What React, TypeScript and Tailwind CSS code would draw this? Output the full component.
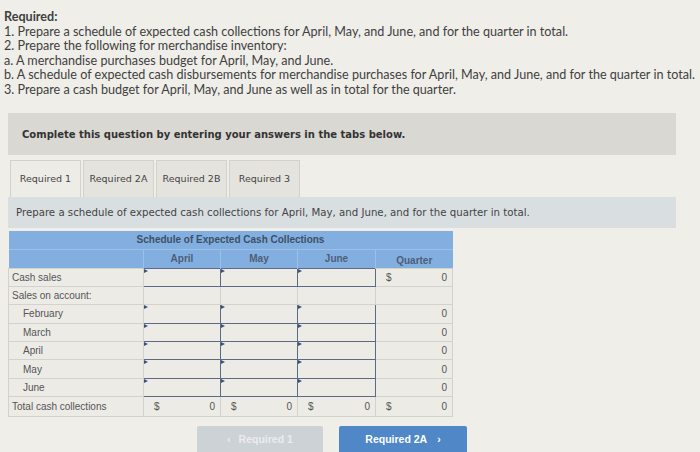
import React from "react";

const months = ["April", "May", "June"];

function InputCell() {
  return (
    <td className="relative h-[18.4px] border-[1.5px] border-[#5d6a86] bg-[#ecebe6] p-0">
      <span className="absolute left-0 top-0 h-0 w-0 border-y-[2.5px] border-l-[4px] border-y-transparent border-l-[#3d4f7a]" />
    </td>
  );
}

function PlainCell() {
  return <td className="h-[18.4px] border border-[#d3d2cd] bg-[#ecebe6] p-0" />;
}

function DollarCell({ value }: { value: string }) {
  return (
    <td className="h-[18.4px] border border-[#d3d2cd] bg-[#ecebe6] p-0">
      <div className="flex items-center justify-between pl-[10px] pr-[5px]">
        <span>$</span>
        <span>{value}</span>
      </div>
    </td>
  );
}

export default function App() {
  const rows: { label: string; indent?: boolean; inputs: boolean; quarter: string }[] = [
    { label: "Cash sales", inputs: true, quarter: "dollar" },
    { label: "Sales on account:", inputs: false, quarter: "" },
    { label: "February", indent: true, inputs: true, quarter: "0" },
    { label: "March", indent: true, inputs: true, quarter: "0" },
    { label: "April", indent: true, inputs: true, quarter: "0" },
    { label: "May", indent: true, inputs: true, quarter: "0" },
    { label: "June", indent: true, inputs: true, quarter: "0" },
  ];

  return (
    <div className="relative h-[452px] w-[700px] overflow-hidden bg-[#efeee9]">
      <div
        className="pl-[4px] pt-[10px] text-[12.6px] leading-[14.5px] text-[#3f3f3f]"
        style={{ fontFamily: "Lato, 'Open Sans', sans-serif" }}
      >
        <div className="font-bold">Required:</div>
        <div>1. Prepare a schedule of expected cash collections for April, May, and June, and for the quarter in total.</div>
        <div>2. Prepare the following for merchandise inventory:</div>
        <div>a. A merchandise purchases budget for April, May, and June.</div>
        <div className="whitespace-nowrap">b. A schedule of expected cash disbursements for merchandise purchases for April, May, and June, and for the quarter in total.</div>
        <div>3. Prepare a cash budget for April, May, and June as well as in total for the quarter.</div>
      </div>

      <div
        className="ml-[8px] mt-[16px] flex h-[42px] w-[668px] items-center bg-[#d9d8d3] pl-[14px] text-[10px] font-bold text-[#333]"
        style={{ fontFamily: "'DejaVu Sans', Verdana, sans-serif" }}
      >
        Complete this question by entering your answers in the tabs below.
      </div>

      <div
        className="ml-[10px] mt-[5px] flex gap-[2px] text-[9.5px] text-[#444]"
        style={{ fontFamily: "'DejaVu Sans', Verdana, sans-serif" }}
      >
        {["Required 1", "Required 2A", "Required 2B", "Required 3"].map((t, i) => (
          <div
            key={t}
            className={
              "flex h-[37px] w-[71px] items-center justify-center border border-b-0 border-[#d2d1cc] " +
              (i === 0 ? "bg-[#edece7]" : "bg-[#e4e3de]")
            }
          >
            {t}
          </div>
        ))}
      </div>

      <div
        className="ml-[8px] flex h-[31px] w-[668px] items-center bg-[#d9dee1] pl-[8px] text-[10.2px] text-[#444]"
        style={{ fontFamily: "'DejaVu Sans', Verdana, sans-serif" }}
      >
        Prepare a schedule of expected cash collections for April, May, and June, and for the quarter in total.
      </div>

      <table
        className="ml-[8px] mt-[3px] table-fixed border-collapse text-[10px] text-[#555]"
        style={{ fontFamily: "'Liberation Sans', Arial, sans-serif", width: 444 }}
      >
        <colgroup>
          <col style={{ width: 135 }} />
          <col style={{ width: 77 }} />
          <col style={{ width: 77 }} />
          <col style={{ width: 78 }} />
          <col style={{ width: 77 }} />
        </colgroup>
        <thead>
          <tr className="h-[18px] bg-[#82afdf]">
            <th colSpan={5} className="p-0 text-center text-[10px] font-bold text-[#3d4f68]">
              Schedule of Expected Cash Collections
            </th>
          </tr>
          <tr className="h-[18px] bg-[#82afdf] text-[#4d5f78]">
            <th className="border-t border-[#9cc1e8] p-0" />
            {months.map((m) => (
              <th key={m} className="border-l border-t border-[#9cc1e8] p-0 text-center font-bold">
                {m}
              </th>
            ))}
            <th className="border-l border-t border-[#9cc1e8] p-0 pt-[3px] text-center font-bold">Quarter</th>
          </tr>
        </thead>
        <tbody>
          {rows.map((r) => (
            <tr key={r.label}>
              <td className={"h-[18.4px] border border-[#d3d2cd] bg-[#ecebe6] p-0 " + (r.indent ? "pl-[14px]" : "pl-[3px]")}>
                {r.label}
              </td>
              {months.map((m) => (r.inputs ? <InputCell key={m} /> : <PlainCell key={m} />))}
              {r.quarter === "dollar" ? (
                <DollarCell value="0" />
              ) : (
                <td className="h-[18.4px] border border-[#d3d2cd] bg-[#ecebe6] p-0 pr-[5px] text-right">{r.quarter}</td>
              )}
            </tr>
          ))}
          <tr>
            <td className="h-[20px] border border-[#d3d2cd] bg-[#ecebe6] p-0 pl-[3px]">Total cash collections</td>
            <DollarCell value="0" />
            <DollarCell value="0" />
            <DollarCell value="0" />
            <DollarCell value="0" />
          </tr>
        </tbody>
      </table>

      <div
        className="mt-[9px] flex gap-[16px] pl-[197px] text-[10.5px] font-bold"
        style={{ fontFamily: "'Liberation Sans', Arial, sans-serif" }}
      >
        <div className="flex h-[28px] w-[126px] items-start justify-center gap-[8px] rounded-[2px] bg-[#cdd2d7] pt-[6px] text-[#e9ecef]">
          <span>‹</span>
          <span>Required 1</span>
        </div>
        <div className="flex h-[28px] w-[128px] items-start justify-center gap-[10px] rounded-[2px] bg-[#4f87c7] pt-[6px] text-white">
          <span>Required 2A</span>
          <span>›</span>
        </div>
      </div>
    </div>
  );
}
